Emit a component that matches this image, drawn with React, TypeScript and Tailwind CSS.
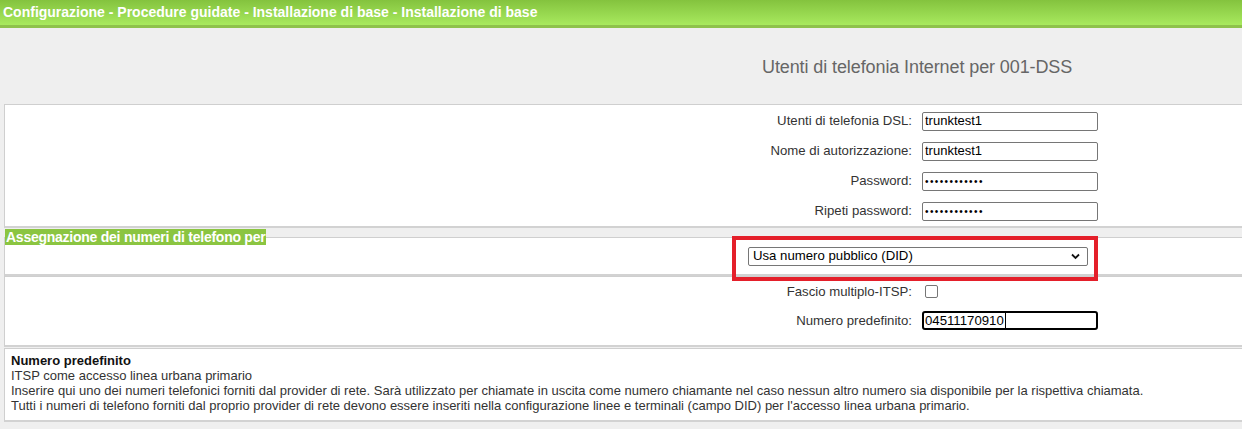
import React from 'react'

const font = "font-['Liberation_Sans',Arial,sans-serif]"

const loginRows = [
  { label: 'Utenti di telefonia DSL:', value: 'trunktest1', type: 'text' },
  { label: 'Nome di autorizzazione:', value: 'trunktest1', type: 'text' },
  { label: 'Password:', value: 'abcdefghijkl', type: 'password' },
  { label: 'Ripeti password:', value: 'abcdefghijkl', type: 'password' },
]

function FieldRow({ label, tall = true, children }: { label: string; tall?: boolean; children: React.ReactNode }) {
  return (
    <div className={`flex items-center ${tall ? 'h-[30px]' : 'h-[29px]'}`}>
      <div className="w-[907px] text-right text-[13.2px] text-[#333]">{label}</div>
      <div className="ml-[10px] flex items-center">{children}</div>
    </div>
  )
}

export default function App() {
  return (
    <div className={`w-[1242px] h-[429px] overflow-hidden bg-[#efefef] ${font}`}>
      {/* title bar */}
      <div className="h-[28px] bg-gradient-to-b from-[#84c33e] to-[#a8ea5e] border-b-[3px] border-[#8ec24b] px-[3px] text-white font-bold text-[14px] leading-[24px]">
        Configurazione - Procedure guidate - Installazione di base - Installazione di base
      </div>

      <div className="h-[76px] flex items-center pl-[762px] pt-[2px] text-[18px] tracking-[-0.1px] text-[#666]">
        Utenti di telefonia Internet per 001-DSS
      </div>

      {/* credentials */}
      <div className="ml-[4px] bg-white border-l border-t border-[#cfcfcf] border-b-2 border-b-[#d2d2d2] pt-[1px]">
        {loginRows.map((row) => (
          <FieldRow key={row.label} label={row.label}>
            <input
              type={row.type}
              defaultValue={row.value}
              className={`w-[176px] h-[19px] border border-[#767676] rounded-[2px] px-[2px] text-black outline-none ${row.type === 'password' ? 'text-[10px] tracking-[1.4px]' : 'text-[13px]'}`}
            />
          </FieldRow>
        ))}
      </div>

      {/* section label */}
      <div className="relative z-10 ml-[5px] mt-[1px] -mb-[8px] w-fit h-[16px] bg-[#8bc541] px-[1px] text-white font-bold text-[14px] leading-[16px] tracking-[-0.25px]">
        Assegnazione dei numeri di telefono per
      </div>

      <div className="relative ml-[4px] h-[39px] bg-white border-l border-t border-[#cfcfcf] border-b-2 border-b-[#d2d2d2] flex items-center">
        <div className="relative ml-[743px] w-[340px] h-[19px] border border-[#767676] rounded-[2px] flex items-center px-[4px] text-[13.2px] text-black">
          Usa numero pubblico (DID)
          <svg className="absolute right-[7px] top-[5px]" width="9" height="7" viewBox="0 0 9 7">
            <path d="M1 1.5 L4.5 5 L8 1.5" fill="none" stroke="#111" strokeWidth="1.8" />
          </svg>
        </div>
        {/* highlight annotation */}
        <div className="absolute left-[727px] top-[-2px] w-[366px] h-[45px] border-[4px] border-[#e41f2a] pointer-events-none" />
      </div>

      <div className="ml-[4px] bg-white border-l border-t border-[#cfcfcf] border-b-2 border-b-[#d2d2d2] pb-[10px]">
        <FieldRow label="Fascio multiplo-ITSP:" tall={false}>
          <div className="ml-[3px] w-[13px] h-[13px] border border-[#767676] rounded-[2px] bg-white" />
        </FieldRow>
        <FieldRow label="Numero predefinito:" tall={false}>
          <div className="w-[176px] h-[19px] border-2 border-black rounded-[3px] flex items-center px-[1px] text-[13.2px] text-black">
            <span className="border-r border-black pr-[1px] leading-[15px]">04511170910</span>
          </div>
        </FieldRow>
      </div>

      {/* help */}
      <div className="ml-[4px] mt-[1px] bg-white border-l border-t border-[#cfcfcf] border-b-2 border-b-[#d2d2d2] px-[6px] pt-[4px] pb-[7px] text-[13px] leading-[15px] text-[#333]">
        <div className="font-bold text-[#111]">Numero predefinito</div>
        <div>ITSP come accesso linea urbana primario</div>
        <div>Inserire qui uno dei numeri telefonici forniti dal provider di rete. Sarà utilizzato per chiamate in uscita come numero chiamante nel caso nessun altro numero sia disponibile per la rispettiva chiamata.</div>
        <div>Tutti i numeri di telefono forniti dal proprio provider di rete devono essere inseriti nella configurazione linee e terminali (campo DID) per l'accesso linea urbana primario.</div>
      </div>
    </div>
  )
}
